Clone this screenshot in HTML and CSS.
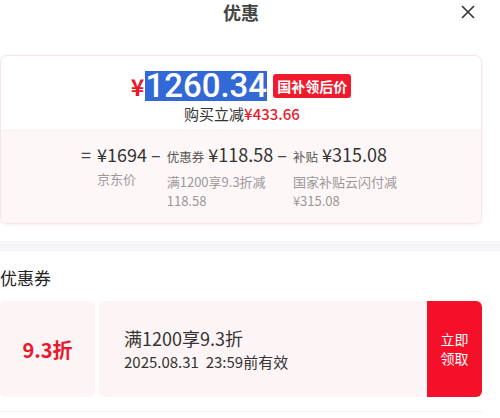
FILE: index.html
```html
<!DOCTYPE html>
<html>
<head>
  <title>优惠</title>
  <link rel="stylesheet" href="styles.css">
</head>
<body>
  <div class="sheet">
    <div class="header">
      <span></span>
      <h1 class="title">优惠</h1>
      <span class="close">
        <svg width="14" height="14" viewBox="0 0 14 14"><path d="M1 1 L13 13 M13 1 L1 13" stroke="#333" stroke-width="1.6" fill="none"/></svg>
      </span>
    </div>

    <div class="price-card">
      <div class="price-top">
        <div class="price-row">
          <span class="yen">¥</span><span class="big-price">1260.34</span>
          <span class="badge">国补领后价</span>
        </div>
        <p class="save">购买立减<span class="red">¥433.66</span></p>
      </div>
      <div class="price-bottom">
        <div class="calc">
          <span class="op">=</span>
          <div class="col">
            <div class="val">¥1694</div>
            <div class="desc">京东价</div>
          </div>
          <span class="op">–</span>
          <div class="col">
            <div class="val"><small>优惠券</small> ¥118.58</div>
            <div class="desc">满1200享9.3折减<br>118.58</div>
          </div>
          <span class="op op-wide">–</span>
          <div class="col">
            <div class="val"><small>补贴</small> ¥315.08</div>
            <div class="desc">国家补贴云闪付减<br>¥315.08</div>
          </div>
        </div>
      </div>
    </div>
  </div>

  <div class="band"></div>

  <div class="sheet">
    <h2 class="section-title">优惠券</h2>
    <div class="coupon">
      <div class="coupon-left">9.3折</div>
      <div class="coupon-main">
        <div class="coupon-name">满1200享9.3折</div>
        <div class="coupon-date">2025.08.31&nbsp; 23:59前有效</div>
      </div>
      <div class="coupon-btn">立即<br>领取</div>
    </div>
    <div class="rule"></div>
  </div>
</body>
</html>
```

FILE: styles.css
```css
body {
  margin: 0;
  background-color: #fff;
  font-family: "Noto Sans CJK SC", sans-serif;
  color: #333;
}

.sheet {
  width: 482px;
}

.header {
  display: grid;
  grid-template-columns: 1fr auto 1fr;
  align-items: center;
  height: 24px;
}

.title {
  margin: 0;
  font-size: 18px;
  font-weight: bold;
  color: #444;
  line-height: 24px;
}

.close {
  justify-self: end;
  margin-right: 7px;
  display: flex;
}

.price-card {
  margin-top: 31px;
  border: 1px solid #f6e4e6;
  border-radius: 7px;
  box-shadow: 0 1px 3px rgba(230, 200, 205, 0.35);
  overflow: hidden;
}

.price-top {
  padding-top: 14px;
  padding-bottom: 6px;
  text-align: center;
}

.price-row {
  display: flex;
  justify-content: center;
  align-items: center;
  height: 32px;
}

.yen {
  color: #e8192c;
  font-size: 23px;
  font-weight: bold;
  margin-right: 1px;
}

.big-price {
  background-color: #3369d6;
  color: #fff;
  font-family: Roboto, sans-serif;
  font-size: 33px;
  font-weight: 500;
  line-height: 30px;
  height: 30px;
}

.badge {
  background-color: #f01a2c;
  color: #fff;
  font-size: 14px;
  font-weight: bold;
  line-height: 24px;
  padding: 0 4px;
  border-radius: 3px;
  margin-left: 6px;
}

.save {
  margin: 2px 0 0;
  font-size: 15px;
  line-height: 20px;
  padding-left: 2px;
}

.red {
  color: #e8192c;
  font-weight: 500;
}

.price-bottom {
  background-color: #fdf7f8;
  border-top: 1px solid #fbeef0;
  padding: 11px 0 13px;
}

.calc {
  display: flex;
  justify-content: center;
  align-items: flex-start;
  padding-right: 8px;
}

.op {
  font-size: 18px;
  line-height: 24px;
  color: #444;
  margin: 0 6px 0 4px;
}

.op-wide {
  margin-left: 4px;
}

.val {
  font-size: 18px;
  line-height: 24px;
  color: #333;
  white-space: nowrap;
}

.val small {
  font-size: 12.5px;
  color: #555;
}

.desc {
  margin-top: 3px;
  font-size: 13px;
  line-height: 19px;
  color: #999;
}

.band {
  height: 10px;
  margin-top: 17px;
  background-color: #f6f6f8;
}

.section-title {
  margin: 17px 0 13px;
  font-size: 17px;
  font-weight: normal;
  line-height: 20px;
  color: #222;
}

.coupon {
  display: flex;
  height: 96px;
  gap: 4px;
}

.coupon-left {
  width: 95px;
  background-color: #fdf4f5;
  border-radius: 6px;
  display: flex;
  align-items: center;
  justify-content: center;
  color: #e8192c;
  font-size: 20px;
  font-weight: bold;
}

.coupon-main {
  flex: 1;
  background-color: #fdf4f5;
  border-radius: 6px 0 0 6px;
  padding-left: 25px;
  display: flex;
  flex-direction: column;
  justify-content: center;
}

.coupon-name {
  font-size: 18px;
  line-height: 24px;
  color: #333;
}

.coupon-date {
  margin-top: 2px;
  font-size: 15px;
  line-height: 20px;
  color: #333;
}

.coupon-btn {
  width: 55px;
  margin-left: -4px;
  background-color: #f5102a;
  border-radius: 0 6px 6px 0;
  color: #fff;
  font-size: 14px;
  line-height: 19px;
  display: flex;
  align-items: center;
  justify-content: center;
  text-align: center;
}

.rule {
  margin-top: 14px;
  height: 1px;
  background-color: #f0f0f0;
}
```
